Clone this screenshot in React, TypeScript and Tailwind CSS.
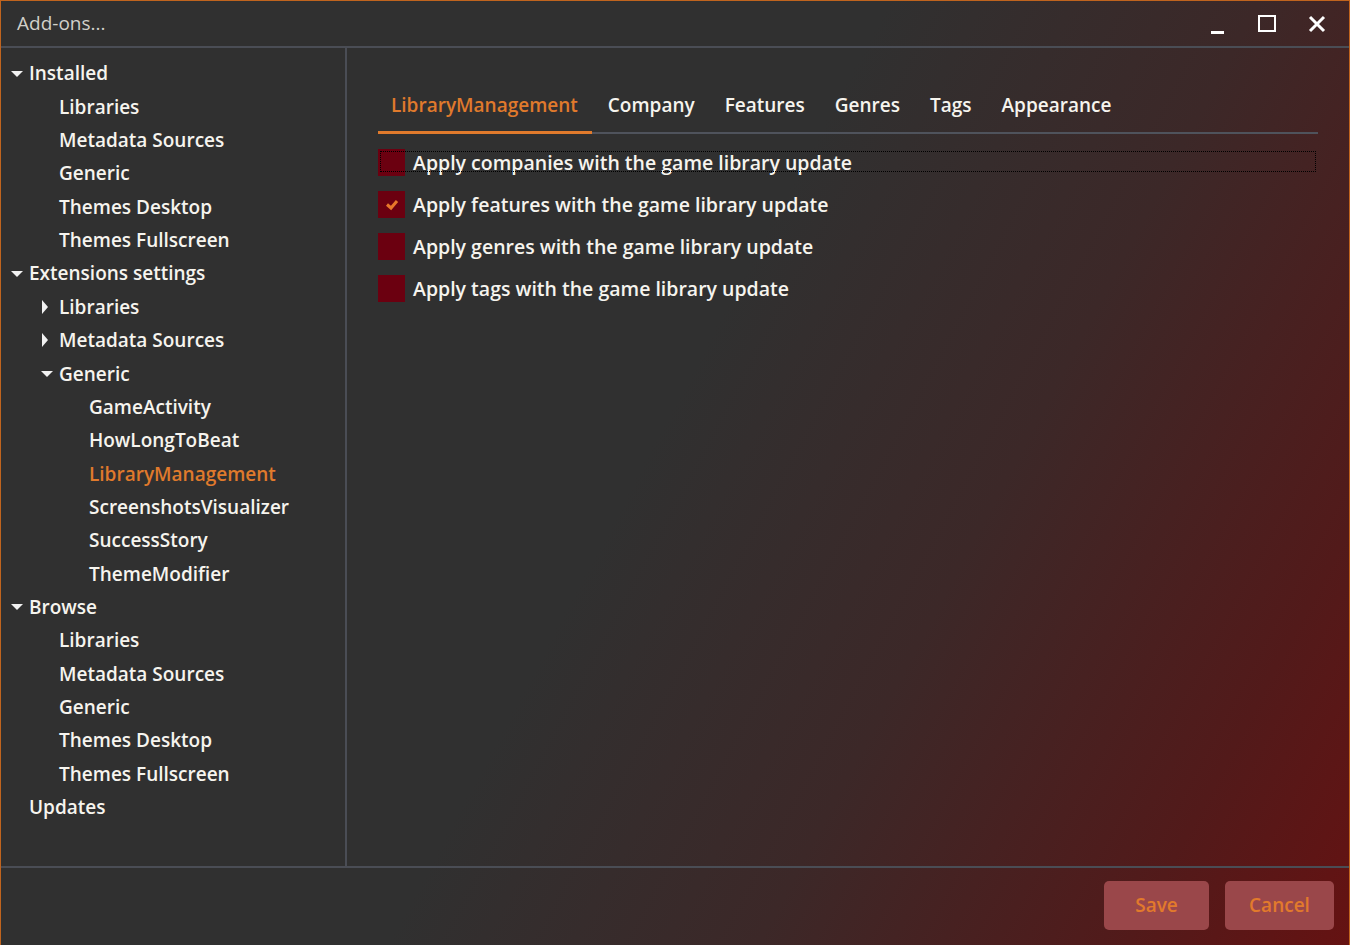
import React from 'react'

type Node = { label: string; level: number; arrow?: 'down' | 'right'; active?: boolean }

const tree: Node[] = [
  { label: 'Installed', level: 0, arrow: 'down' },
  { label: 'Libraries', level: 1 },
  { label: 'Metadata Sources', level: 1 },
  { label: 'Generic', level: 1 },
  { label: 'Themes Desktop', level: 1 },
  { label: 'Themes Fullscreen', level: 1 },
  { label: 'Extensions settings', level: 0, arrow: 'down' },
  { label: 'Libraries', level: 1, arrow: 'right' },
  { label: 'Metadata Sources', level: 1, arrow: 'right' },
  { label: 'Generic', level: 1, arrow: 'down' },
  { label: 'GameActivity', level: 2 },
  { label: 'HowLongToBeat', level: 2 },
  { label: 'LibraryManagement', level: 2, active: true },
  { label: 'ScreenshotsVisualizer', level: 2 },
  { label: 'SuccessStory', level: 2 },
  { label: 'ThemeModifier', level: 2 },
  { label: 'Browse', level: 0, arrow: 'down' },
  { label: 'Libraries', level: 1 },
  { label: 'Metadata Sources', level: 1 },
  { label: 'Generic', level: 1 },
  { label: 'Themes Desktop', level: 1 },
  { label: 'Themes Fullscreen', level: 1 },
  { label: 'Updates', level: 0 },
]

const tabs = ['LibraryManagement', 'Company', 'Features', 'Genres', 'Tags', 'Appearance']

const options = [
  { label: 'Apply companies with the game library update', checked: false, focus: true },
  { label: 'Apply features with the game library update', checked: true },
  { label: 'Apply genres with the game library update', checked: false },
  { label: 'Apply tags with the game library update', checked: false },
]

function Arrow({ dir }: { dir: 'down' | 'right' }) {
  if (dir === 'down')
    return (
      <svg width="12" height="8" viewBox="0 0 12 8" className="shrink-0">
        <path d="M0 1 L12 1 L6 7 Z" fill="#f2f2f2" />
      </svg>
    )
  return (
    <svg width="8" height="14" viewBox="0 0 8 14" className="shrink-0">
      <path d="M1 0 L7 7 L1 14 Z" fill="#f2f2f2" />
    </svg>
  )
}

function TreeRow({ node }: { node: Node }) {
  const pad = ['pl-[10px]', 'pl-[40px]', 'pl-[70px]'][node.level]
  return (
    <div className={`flex items-center h-[33.35px] ${pad}`}>
      <div className="w-[18px] flex items-center">{node.arrow && <Arrow dir={node.arrow} />}</div>
      <span className={node.active ? 'text-[#e07a2c]' : 'text-[#f6f4ee]'}>{node.label}</span>
    </div>
  )
}

export default function App() {
  return (
    <div
      className="w-[1350px] h-[945px] overflow-hidden flex flex-col border-t border-l border-r border-[#c0641e] bg-[linear-gradient(118deg,#303030_0%,#303030_48%,#3c2828_68%,#521a1a_88%,#651212_100%)] text-[19px] font-semibold text-[#f6f4ee]"
      style={{ fontFamily: '"Open Sans", "DejaVu Sans", sans-serif' }}
    >
      <div className="h-[47px] flex items-center justify-between shrink-0 border-b-2 border-[#4a4d55]">
        <span className="pl-[16px] text-[#d2d0ca] text-[19px] font-medium">Add-ons...</span>
        <div className="flex items-center h-full">
          <div className="w-[50px] flex justify-center items-end h-[20px] pt-[2px]">
            <div className="w-[13px] h-[3px] bg-white mt-[14px]" />
          </div>
          <div className="w-[50px] flex justify-center">
            <div className="w-[18px] h-[17px] border-2 border-white" />
          </div>
          <div className="w-[50px] flex justify-center">
            <svg width="18" height="18" viewBox="0 0 18 18">
              <path d="M2 2 L16 16 M16 2 L2 16" stroke="white" strokeWidth="3" />
            </svg>
          </div>
          <div className="w-[7px]" />
        </div>
      </div>

      <div className="flex flex-1 min-h-0">
        <div className="w-[346px] border-r-2 border-[#4a4d55] pt-[9px]">
          {tree.map((n, i) => (
            <TreeRow key={i} node={n} />
          ))}
        </div>
        <div className="flex-1 pl-[31px] pr-[31px] pt-[34px]">
          <div className="flex gap-[3px] border-b-2 border-[#4f535c] h-[52px]">
            {tabs.map((t, i) => (
              <div
                key={t}
                className={`pl-[13px] pr-[14px] pt-[9px] mb-[-2px] ${
                  i === 0 ? 'text-[#e07a2c] border-b-[3px] border-[#e07a2c]' : 'text-[#f6f4ee]'
                }`}
              >
                {t}
              </div>
            ))}
          </div>
          <div className="pt-[15px] flex flex-col gap-[15px]">
            {options.map((o) => (
              <div key={o.label} className="flex items-center h-[27px] relative">
                <div className="w-[27px] h-[27px] bg-[#6b0010] flex items-center justify-center shrink-0">
                  {o.checked && (
                    <svg width="14" height="12" viewBox="0 0 14 12">
                      <path d="M2 5.5 L6 9 L12 2" stroke="#e8782a" strokeWidth="3" fill="none" />
                    </svg>
                  )}
                </div>
                <span className="pl-[8px] text-[19.5px]">{o.label}</span>
                {o.focus && (
                  <div className="absolute left-[2px] right-[2px] top-[2px] bottom-[4px] border border-dotted border-black" />
                )}
              </div>
            ))}
          </div>
        </div>
      </div>

      <div className="h-[79px] shrink-0 border-t-2 border-[#4a4d55] flex items-center justify-end gap-[16px] pr-[15px] pb-[2px]">
        <button className="w-[105px] h-[49px] rounded-[5px] bg-[#9a474a] text-[#e27a2c]">Save</button>
        <button className="w-[109px] h-[49px] rounded-[5px] bg-[#9a474a] text-[#e27a2c]">Cancel</button>
      </div>
    </div>
  )
}
